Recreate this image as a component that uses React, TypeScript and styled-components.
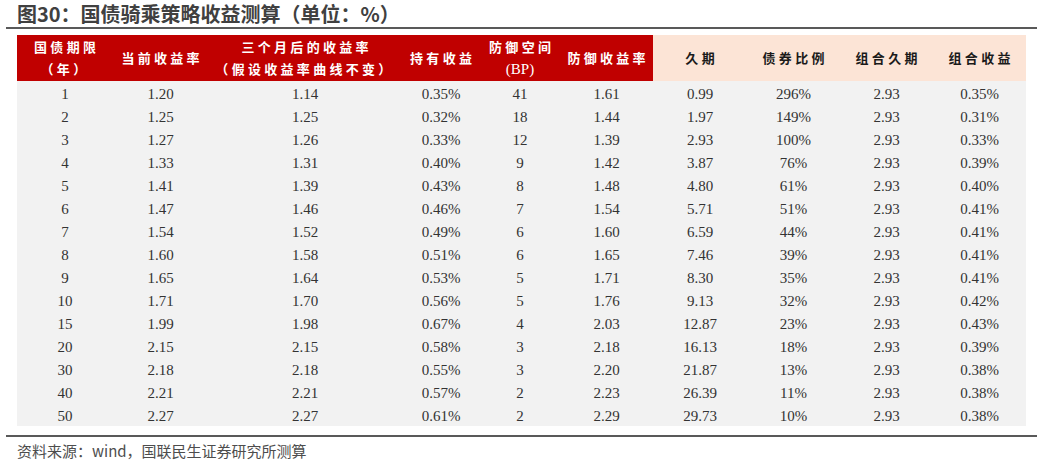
import React from "react";
import styled, { createGlobalStyle } from "styled-components";

const GlobalStyle = createGlobalStyle`
  html, body { margin: 0; padding: 0; background: #ffffff; }
  body { font-family: "Liberation Serif", "Noto Sans CJK SC", serif; }
`;

const Page = styled.div`
  width: 1031px;
  margin-left: 6px;
  display: flex;
  flex-direction: column;
`;

const Title = styled.h1`
  margin: 0;
  padding: 1px 0 0 11px;
  height: 26px;
  line-height: 26px;
  font-family: "Noto Sans CJK SC", "Noto Sans", sans-serif;
  font-size: 20px;
  font-weight: 700;
  color: #404040;
  border-bottom: 2px solid #595959;
`;

const TableWrap = styled.div`
  padding: 6px 11px 9px 11px;
`;

const Table = styled.table`
  width: 1009px;
  border-collapse: collapse;
  table-layout: fixed;
`;

const HeadCell = styled.th<{ $pink?: boolean }>`
  height: 46px;
  padding: 0;
  background: ${(p) => (p.$pink ? "#fce4d6" : "#c00000")};
  color: ${(p) => (p.$pink ? "#1a1a1a" : "#ffffff")};
  font-family: "Noto Sans CJK SC", sans-serif;
  font-size: 13px;
  font-weight: 700;
  letter-spacing: 3.3px;
  text-indent: 3.3px;
  line-height: 22px;
  text-align: center;
  vertical-align: middle;
`;

const Latin = styled.span`
  font-family: "Liberation Serif", serif;
  font-size: 15px;
  font-weight: 400;
  letter-spacing: 0;
`;

const Row = styled.tr`
  background: #f2f2f2;
`;

const Cell = styled.td`
  height: 19px;
  padding: 4px 0 0 0;
  font-family: "Liberation Serif", serif;
  font-size: 15px;
  color: #333333;
  text-align: center;
  vertical-align: top;
  line-height: 19px;
`;

const Footer = styled.div`
  border-top: 2px solid #595959;
  padding: 3px 0 0 11px;
  font-family: "Noto Sans CJK SC", "Noto Sans", sans-serif;
  font-size: 15px;
  line-height: 22px;
  color: #4d4d4d;
`;

const widths = [96, 95, 194, 78, 80, 93, 94, 93, 93, 93];

type Head = { lines: React.ReactNode[]; pink?: boolean };

const heads: Head[] = [
  { lines: ["国债期限", "（年）"] },
  { lines: ["当前收益率"] },
  { lines: ["三个月后的收益率", "（假设收益率曲线不变）"] },
  { lines: ["持有收益"] },
  { lines: ["防御空间", <Latin key="bp">(BP)</Latin>] },
  { lines: ["防御收益率"] },
  { lines: ["久期"], pink: true },
  { lines: ["债券比例"], pink: true },
  { lines: ["组合久期"], pink: true },
  { lines: ["组合收益"], pink: true },
];

const rows: string[][] = [
  ["1", "1.20", "1.14", "0.35%", "41", "1.61", "0.99", "296%", "2.93", "0.35%"],
  ["2", "1.25", "1.25", "0.32%", "18", "1.44", "1.97", "149%", "2.93", "0.31%"],
  ["3", "1.27", "1.26", "0.33%", "12", "1.39", "2.93", "100%", "2.93", "0.33%"],
  ["4", "1.33", "1.31", "0.40%", "9", "1.42", "3.87", "76%", "2.93", "0.39%"],
  ["5", "1.41", "1.39", "0.43%", "8", "1.48", "4.80", "61%", "2.93", "0.40%"],
  ["6", "1.47", "1.46", "0.46%", "7", "1.54", "5.71", "51%", "2.93", "0.41%"],
  ["7", "1.54", "1.52", "0.49%", "6", "1.60", "6.59", "44%", "2.93", "0.41%"],
  ["8", "1.60", "1.58", "0.51%", "6", "1.65", "7.46", "39%", "2.93", "0.41%"],
  ["9", "1.65", "1.64", "0.53%", "5", "1.71", "8.30", "35%", "2.93", "0.41%"],
  ["10", "1.71", "1.70", "0.56%", "5", "1.76", "9.13", "32%", "2.93", "0.42%"],
  ["15", "1.99", "1.98", "0.67%", "4", "2.03", "12.87", "23%", "2.93", "0.43%"],
  ["20", "2.15", "2.15", "0.58%", "3", "2.18", "16.13", "18%", "2.93", "0.39%"],
  ["30", "2.18", "2.18", "0.55%", "3", "2.20", "21.87", "13%", "2.93", "0.38%"],
  ["40", "2.21", "2.21", "0.57%", "2", "2.23", "26.39", "11%", "2.93", "0.38%"],
  ["50", "2.27", "2.27", "0.61%", "2", "2.29", "29.73", "10%", "2.93", "0.38%"],
];

export default function App() {
  return (
    <>
      <GlobalStyle />
      <Page>
        <Title>图30：国债骑乘策略收益测算（单位：%）</Title>
        <TableWrap>
          <Table>
            <colgroup>
              {widths.map((w, i) => (
                <col key={i} style={{ width: w }} />
              ))}
            </colgroup>
            <thead>
              <tr>
                {heads.map((h, i) => (
                  <HeadCell key={i} $pink={h.pink}>
                    {h.lines.map((l, j) => (
                      <React.Fragment key={j}>
                        {j > 0 && <br />}
                        {l}
                      </React.Fragment>
                    ))}
                  </HeadCell>
                ))}
              </tr>
            </thead>
            <tbody>
              {rows.map((r, i) => (
                <Row key={i}>
                  {r.map((c, j) => (
                    <Cell key={j}>{c}</Cell>
                  ))}
                </Row>
              ))}
            </tbody>
          </Table>
        </TableWrap>
        <Footer>资料来源：wind，国联民生证券研究所测算</Footer>
      </Page>
    </>
  );
}
